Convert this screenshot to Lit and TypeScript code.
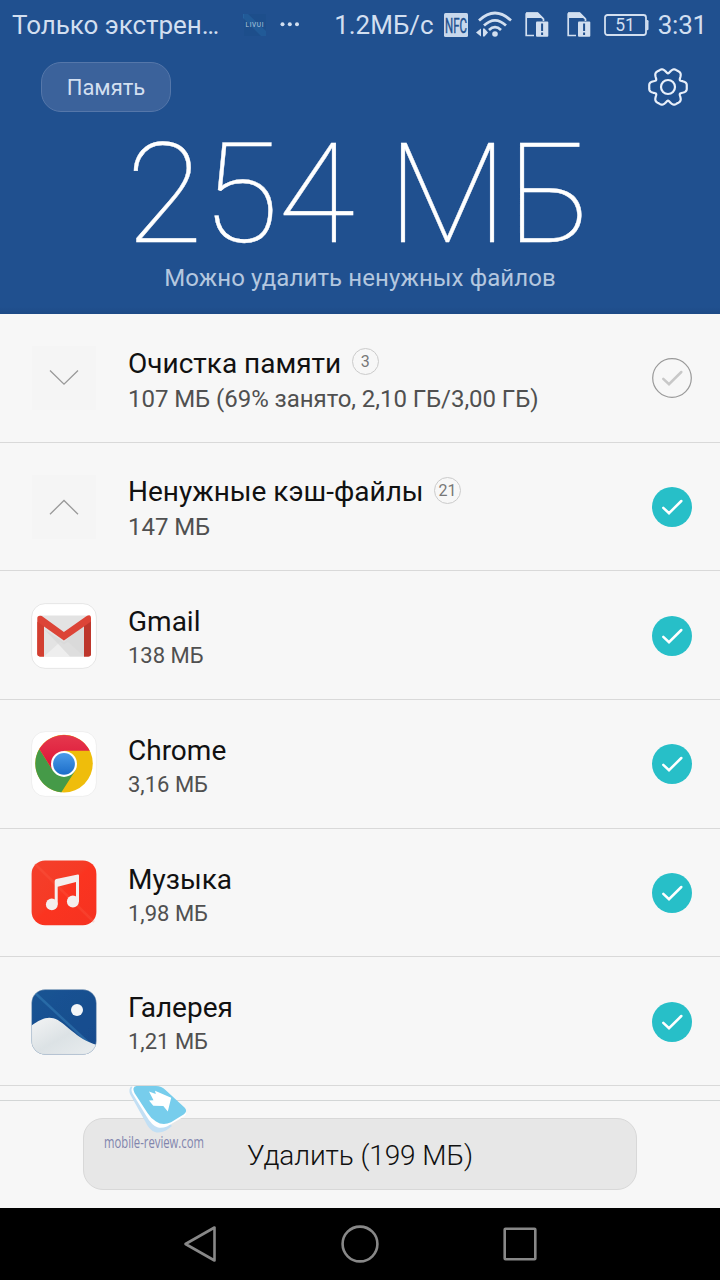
import { LitElement, html, css, svg } from "lit";
import { customElement, property } from "lit/decorators.js";

const gearPath = (): string => {
  const pts: string[] = [];
  for (let i = 0; i < 180; i++) {
    const t = (i * Math.PI) / 90;
    const r = 17.1 + 2.5 * Math.cos(6 * t) - 0.85 * Math.cos(12 * t);
    pts.push(`${(21 + r * Math.cos(t)).toFixed(2)} ${(21 + r * Math.sin(t)).toFixed(2)}`);
  }
  return `M${pts.join("L")}Z`;
};

const icons: Record<string, unknown> = {
  down: svg`<rect width="64" height="64" fill="#f5f5f5"/><path d="M18 24.5L32 38.2L46 24.5" fill="none" stroke="#999" stroke-width="1.3"/>`,
  up: svg`<rect width="64" height="64" fill="#f5f5f5"/><path d="M18 39.2L32 25.5L46 39.2" fill="none" stroke="#999" stroke-width="1.3"/>`,
  gmail: svg`
    <rect x="-.4" y="-.4" width="64.8" height="64.8" rx="13.5" fill="#fff" stroke="#e3e3e3" stroke-width=".9"/>
    <path d="M8 11.4H56V52.6H8Z" fill="#e3e3e3"/>
    <path d="M12 52.6L28 38L32 40.5L36 38L52 52.6Z" fill="#eee"/>
    <path d="M12 25L38 52.6H52.5V20L32 38Z" fill="#d6d6d6" opacity=".65"/>
    <path d="M7.8 11.7A2.6 2.6 0 0 0 5.3 14.4V50Q5.3 52.4 7.8 52.4H12V22.5L31.9 36.5L52 22.5V52.4H56.4Q59 52.4 59 50V14.4Q59 9.5 54.3 12.2L31.9 28L9.8 12.1Q8.8 11.5 7.8 11.7Z" fill="#dc4437"/>
    <path d="M5.4 17.8L12 22.5V52.4H7.8Q5.3 52.4 5.3 50Z" fill="#d23f31"/>
    <path d="M52 22.5L59 17.6V50Q59 52.4 56.4 52.4H52Z" fill="#bd362c"/>`,
  chrome: svg`
    <defs>
      <linearGradient id="cr" x2="0" y2="1"><stop stop-color="#e5384d"/><stop offset="1" stop-color="#dc1237"/></linearGradient>
      <linearGradient id="cb" x2="0" y2="1"><stop stop-color="#4a9be8"/><stop offset="1" stop-color="#1c6dc9"/></linearGradient>
    </defs>
    <rect x="-.4" y="-.4" width="64.8" height="64.8" rx="13.5" fill="#fff" stroke="#ebebeb" stroke-width=".8"/>
    <circle cx="32" cy="31.6" r="28.8" fill="#efbd0b"/>
    <path d="M7.3 17A28.8 28.8 0 0 0 29.4 60.3L43.5 38.2L32 31.6L20.6 38.2Z" fill="#459a48"/>
    <path d="M7.3 17A28.8 28.8 0 0 1 57.8 18.8H32L20.6 38.2Z" fill="url(#cr)"/>
    <circle cx="32" cy="31.9" r="13" fill="#fff"/><circle cx="32" cy="31.9" r="10.9" fill="url(#cb)"/>`,
  music: svg`
    <defs><linearGradient id="mu" x2="1" y2="1"><stop stop-color="#f4402c"/><stop offset=".45" stop-color="#f63a25"/><stop offset=".5" stop-color="#fb3420"/><stop offset="1" stop-color="#f53221"/></linearGradient></defs>
    <rect x="-.4" y="-.6" width="64.8" height="64.8" rx="13.5" fill="url(#mu)"/>
    <path d="M3 3L62 61" stroke="#ff7058" stroke-width="2.5" opacity=".2"/>
    <path d="M22.7 19.8Q22.8 18.4 24.3 17.9L45.8 13.5Q47 13.3 47 14.6V40.5H44V21L25.7 25.8V43.4H22.7Z" fill="#f4efee"/>
    <circle cx="19.8" cy="43.4" r="5.9" fill="#f4efee"/><circle cx="40.9" cy="40.5" r="6" fill="#f4efee"/>`,
  gallery: svg`
    <defs>
      <clipPath id="gc"><rect x="-.4" y="-.4" width="64.8" height="64.8" rx="13.5"/></clipPath>
      <linearGradient id="gs" x2="1" y2="1"><stop stop-color="#1a5594"/><stop offset="1" stop-color="#164a8d"/></linearGradient>
      <linearGradient id="gh" x2="1" y2="1"><stop stop-color="#f3f4f5"/><stop offset=".5" stop-color="#dce2e5"/><stop offset="1" stop-color="#e9edef"/></linearGradient>
    </defs>
    <g clip-path="url(#gc)">
      <rect x="-1" y="-1" width="66" height="66" fill="url(#gs)"/>
      <path d="M1 1L62 58" stroke="#4697cb" stroke-width="2.4" opacity=".35"/>
      <path d="M-1 36C8 29.5 14 26.5 21.5 28.3C33 31.5 44 49.5 65 55V65H-1Z" fill="url(#gh)"/>
      <circle cx="45" cy="19.9" r="6" fill="#f3f6f8"/>
    </g>
    <rect x="-.4" y="-.4" width="64.8" height="64.8" rx="13.5" fill="none" stroke="#b8c3cc" stroke-width=".6" opacity=".6"/>`,
};

@customElement("status-bar")
export class StatusBar extends LitElement {
  static styles = css`
    :host { display: flex; align-items: center; height: 50px; padding: 0 13px 0 12px; color: #d2dff0; font-size: 26px; line-height: 50px; white-space: nowrap; }
    .carrier { width: 231px; letter-spacing: -.05px; }
    .live { width: 24px; height: 24px; margin-right: 13px; }
    .dots { width: 20px; height: 24px; }
    .right { flex: 1; display: flex; align-items: center; justify-content: flex-end; }
    .time { letter-spacing: -.2px; }
    svg { display: block; overflow: visible; }
    .nfc { margin-left: 10px; margin-top: -1px; }
    .wifi { margin-left: 8px; margin-top: -2px; }
    .sim { margin-left: 13px; margin-top: -1px; }
    .sim + .sim { margin-left: 18px; }
    .bat { margin: 0 9px 0 13px; }
    text { font-family: Roboto, sans-serif; }
  `;
  sim() {
    return svg`<path d="M1.2 1.2H12.5L18.5 7.2V9M9 23.5H1.2V1.2" fill="none" stroke="#d2dff0" stroke-width="1.7"/><path d="M1 .5H13L18.5 6H1Z" fill="#d2dff0"/><rect x="11" y="9.5" width="12.3" height="15.3" rx="1" fill="#d2dff0"/><path d="M17.1 11.5V19M17.1 20.6V23" stroke="#20508e" stroke-width="2"/>`;
  }
  render() {
    return html`
      <div class="carrier">Только экстрен…</div>
      <svg class="live" viewBox="0 0 24 24"><path d="M0 1H5L23 18V23H18L0 5Z" fill="#2a72b0" opacity=".55"/><path d="M1 1H23V23H1Z" fill="#194a83" opacity=".35"/><text x="2.500" y="14" font-size="6.5" textLength="18" fill="#b4c8df">LIVUI</text></svg>
      <svg class="dots" viewBox="0 0 20 24"><g fill="#d2dff0"><circle cx="2.5" cy="11.2" r="2"/><circle cx="9.8" cy="11.2" r="2"/><circle cx="17" cy="11.2" r="2"/></g></svg>
      <div class="right">
        <span>1.2МБ/с</span>
        <svg class="nfc" width="24" height="24" viewBox="0 0 24 24"><rect width="24" height="24" rx="1.5" fill="#c8d8ec"/><text x="1" y="19.5" font-size="20" textLength="22" lengthAdjust="spacingAndGlyphs" fill="#20508e" stroke="#20508e" stroke-width=".4">NFC</text></svg>
        <svg class="wifi" width="36" height="26" viewBox="0 0 36 26"><g fill="none" stroke="#d2dff0" stroke-width="2.7"><path d="M3 9.5Q19 -5.5 35 9.5"/><path d="M8 14.5Q19 4.2 30 14.5"/><path d="M13 19Q19 13.2 25 19"/></g><circle cx="19" cy="23" r="2.8" fill="#d2dff0"/><path d="M0 21.500L5 17.5V25.5ZM7 17.5H8.5L12 21.5L8.5 25.5H7Z" fill="#d2dff0"/></svg>
        <svg class="sim" width="24" height="26" viewBox="0 0 24 26">${this.sim()}</svg>
        <svg class="sim" width="24" height="26" viewBox="0 0 24 26">${this.sim()}</svg>
        <svg class="bat" width="45" height="22" viewBox="0 0 45 22"><rect x="1" y="1" width="41" height="20" rx="2.5" fill="none" stroke="#d2dff0" stroke-width="1.8"/><path d="M42.3 6H43.3Q44.5 6 44.5 7.3V15Q44.5 16.2 43.3 16.2H42.3Z" fill="#d2dff0"/><text x="21" y="17.3" font-size="17.5" text-anchor="middle" fill="#d2dff0">51</text></svg>
        <span class="time">3:31</span>
      </div>`;
  }
}

@customElement("clean-row")
export class CleanRow extends LitElement {
  @property() icon = "";
  @property() name = "";
  @property() size = "";
  @property() count = "";
  @property({ type: Boolean }) checked = false;
  @property({ type: Boolean, reflect: true }) group = false;
  static styles = css`
    :host { display: flex; box-sizing: border-box; height: 128.65px; padding: 1.2px 28px 0 32px; border-bottom: 1px solid #d9d9d9; align-items: center; }
    svg { display: block; overflow: visible; flex: none; }
    .text { flex: 1; align-self: flex-start; margin-left: 32px; padding-top: 33px; white-space: nowrap; }
    .title { display: flex; align-items: center; height: 34px; font-size: 28px; line-height: 34px; color: #111; }
    .size { font-size: 22px; line-height: 33px; color: #505050; }
    :host([group]) .text { padding-top: 31.5px; }
    :host([group]) .size { font-size: 24px; line-height: 37px; letter-spacing: -.05px; }
    .badge { box-sizing: border-box; width: 27px; height: 27px; margin: -4px 0 0 10.500px; border: 1px solid #cbcbcb; border-radius: 50%; font-size: 16px; line-height: 25px; text-align: center; color: #777; }
  `;
  render() {
    return html`
      <svg width="64" height="64" viewBox="0 0 64 64">${icons[this.icon]}</svg>
      <div class="text">
        <div class="title"><span>${this.name}</span>${this.count ? html`<span class="badge">${this.count}</span>` : ""}</div>
        <div class="size">${this.size}</div>
      </div>
      <svg width="40" height="40" viewBox="0 0 40 40">
        ${this.checked
          ? svg`<circle cx="20" cy="20" r="20" fill="#27bfc8"/>`
          : svg`<circle cx="20" cy="20" r="19.3" fill="none" stroke="#999" stroke-width="1.2"/>`}
        <path d="M11.3 20.8L17 26.2L29.3 14" fill="none" stroke=${this.checked ? "#fff" : "#c8c8c8"} stroke-width="2.5" stroke-linecap="round"/>
      </svg>`;
  }
}

@customElement("app-root")
export class AppRoot extends LitElement {
  static styles = css`
    :host { display: flex; flex-direction: column; position: relative; width: 720px; height: 1280px; overflow: hidden; background: #f7f7f7; font-family: Roboto, "Noto Sans", sans-serif; }
    svg { display: block; overflow: visible; }
    .head { flex: none; box-sizing: border-box; height: 314px; background: linear-gradient(#20508f 0, #20508f 307px, #1d4a86 314px); }
    .tools { display: flex; align-items: center; justify-content: space-between; height: 74px; padding: 0 31px 0 41px; }
    .memory { box-sizing: border-box; width: 130px; height: 50px; border: 1px solid #5577aa; border-radius: 20px; background: #3b629b; color: #d2dff0; font-size: 22px; line-height: 50px; text-align: center; }
    .total { height: 134px; color: #fff; font-weight: 100; font-size: 140px; line-height: 140px; letter-spacing: -.5px; -webkit-text-stroke: .4px #fff; text-align: center; white-space: nowrap; }
    .hint { height: 40px; color: #b4c7df; font-size: 24px; line-height: 41px; letter-spacing: .1px; text-align: center; }
    .list { flex: none; display: flex; flex-direction: column; height: 786px; }
    .footer { flex: none; box-sizing: border-box; height: 108px; padding: 17px 83px 0; border-top: 1px solid #d3d6d6; }
    .button { box-sizing: border-box; width: 554px; height: 72px; border: 1px solid #d8d8d8; border-radius: 20px; background: #e7e7e7; color: #111; font-size: 28px; font-weight: 300; line-height: 73px; letter-spacing: -.1px; text-align: center; }
    .nav { height: 72px; background: #000; display: flex; justify-content: center; gap: 120px; align-items: center; }
    .mark { position: absolute; left: 100px; top: 1080px; }
    .mark text { font-family: "Open Sans", sans-serif; }
  `;
  render() {
    return html`
      <div class="head">
        <status-bar></status-bar>
        <div class="tools">
          <div class="memory">Память</div>
          <svg width="42" height="42" viewBox="0 0 42 42" fill="none" stroke="#e8effa" stroke-width="2.2"><path d=${gearPath()}/><circle cx="21" cy="21" r="7"/></svg>
        </div>
        <div class="total">254 МБ</div>
        <div class="hint">Можно удалить ненужных файлов</div>
      </div>
      <div class="list">
        <clean-row group icon="down" name="Очистка памяти" count="3" size="107 МБ (69% занято, 2,10 ГБ/3,00 ГБ)"></clean-row>
        <clean-row group checked icon="up" name="Ненужные кэш-файлы" count="21" size="147 МБ"></clean-row>
        <clean-row checked icon="gmail" name="Gmail" size="138 МБ"></clean-row>
        <clean-row checked icon="chrome" name="Chrome" size="3,16 МБ"></clean-row>
        <clean-row checked icon="music" name="Музыка" size="1,98 МБ"></clean-row>
        <clean-row checked icon="gallery" name="Галерея" size="1,21 МБ"></clean-row>
      </div>
      <div class="footer"><div class="button">Удалить (199 МБ)</div></div>
      <div class="nav">
        <svg width="40" height="40" viewBox="0 0 40 40"><path d="M5.500 20L34.5 3.5V36.5Z" fill="none" stroke="#888" stroke-width="2.6" stroke-linejoin="round"/></svg>
        <svg width="40" height="40" viewBox="0 0 40 40"><circle cx="20" cy="20" r="17.4" fill="none" stroke="#888" stroke-width="2.6"/></svg>
        <svg width="40" height="40" viewBox="0 0 40 40"><rect x="4.7" y="4.7" width="30.6" height="30.6" rx=".8" fill="none" stroke="#888" stroke-width="2.6"/></svg>
      </div>
      <svg class="mark" width="110" height="76" viewBox="0 0 110 76">
        <path d="M31 6.500Q28.500 9 30 14L45 41Q49 50 55 52Q60 53.500 66 50.500L72 46L36 8Z" fill="#c2dff4"/>
        <path d="M33.500 6Q30 8.500 32.500 13.500L46 35.500Q52 46 58 47.500Q62 48.500 67 46.500L84 36.500Q86.500 35 86 31L62 40Z" fill="#fff"/>
        <path d="M36.500 6H56Q61.500 6 65.500 10L84.500 27.500Q88 31 84 34.200L71 42.300Q63 46.300 56 41.500Q50.500 38 47.500 33L34.500 13Q31.500 7 36.500 6Z" fill="#77cdec"/>
        <path d="M49 11.600L55.800 14L55 10.800L71.200 17.800L67.800 31.500L63.300 26L53.300 25.800L49 20.600L53.500 20.300Z" fill="#fff"/>
        <text x="4" y="68" font-size="15.500" textLength="100" lengthAdjust="spacingAndGlyphs" fill="#8185ad">mobile-review.com</text>
      </svg>`;
  }
}
